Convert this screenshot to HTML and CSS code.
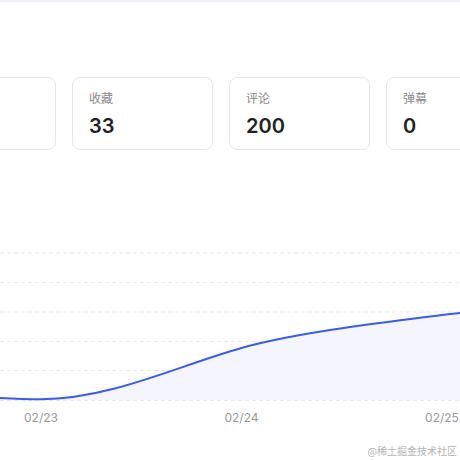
FILE: index.html
```html
<!DOCTYPE html>
<html lang="zh-CN">
<head>
<meta charset="utf-8">
<link rel="stylesheet" href="styles.css">
</head>
<body>
<div class="page">
  <div class="topbar"></div>
  <div class="cards">
    <div class="card"></div>
    <div class="card"><div class="label">收藏</div><div class="value">33</div></div>
    <div class="card"><div class="label">评论</div><div class="value">200</div></div>
    <div class="card"><div class="label">弹幕</div><div class="value">0</div></div>
  </div>
  <svg class="chart" width="460" height="200" viewBox="0 230 460 200">
    <g class="grid">
      <line x1="0" y1="253" x2="460" y2="253"/>
      <line x1="0" y1="282.5" x2="460" y2="282.5"/>
      <line x1="0" y1="312" x2="460" y2="312"/>
      <line x1="0" y1="341.5" x2="460" y2="341.5"/>
      <line x1="0" y1="370.5" x2="460" y2="370.5"/>
      <line x1="0" y1="400.5" x2="460" y2="400.5"/>
    </g>
    <path class="area" d="M-10,397.3 C10,398.6 25,399.3 41,399.3 C110,399.3 180,365 241.5,348 C300,331.6 390,322 442,315 C455,313.3 465,312.5 475,311.6 L475,400 L-10,400 Z"/>
    <path class="line" d="M-10,397.3 C10,398.6 25,399.3 41,399.3 C110,399.3 180,365 241.5,348 C300,331.6 390,322 442,315 C455,313.3 465,312.5 475,311.6"/>
    <g class="axis">
      <text x="41" y="421.5">02/23</text>
      <text x="241.5" y="421.5">02/24</text>
      <text x="442" y="421.5">02/25</text>
    </g>
  </svg>
  <div class="watermark">@稀土掘金技术社区</div>
</div>
</body>
</html>
```

FILE: styles.css
```css
html, body {
  margin: 0;
  padding: 0;
  background: #ffffff;
}
body {
  width: 460px;
  height: 460px;
  overflow: hidden;
  font-family: Inter, "Noto Sans CJK SC", sans-serif;
}
.page {
  position: relative;
  width: 460px;
  height: 460px;
  overflow: hidden;
}
.topbar {
  height: 2px;
  background: #edf0f5;
}
.cards {
  display: flex;
  gap: 16px;
  margin-top: 75px;
  margin-left: -85px;
}
.card {
  flex: 0 0 141px;
  box-sizing: border-box;
  height: 73px;
  border: 1px solid #e6e7eb;
  border-radius: 8px;
  padding: 11px 16px 0 16px;
}
.label {
  font-size: 12px;
  line-height: 18px;
  color: #8a8a8a;
  font-family: "Noto Sans CJK SC", sans-serif;
}
.value {
  margin-top: 5px;
  font-size: 20px;
  line-height: 28px;
  font-weight: 600;
  color: #222222;
}
.chart {
  display: block;
  margin-top: 80px;
}
.grid line {
  stroke: #e9e9ec;
  stroke-width: 1;
  stroke-dasharray: 4 3;
}
.area {
  fill: #f5f6fd;
}
.line {
  fill: none;
  stroke: #3a5af2;
  stroke-width: 2;
}
.axis text {
  font-family: Inter, sans-serif;
  font-size: 12px;
  fill: #9a9a9a;
  text-anchor: middle;
}
.watermark {
  position: absolute;
  right: 3px;
  bottom: 2px;
  font-family: "Noto Sans CJK SC", sans-serif;
  font-size: 10px;
  line-height: 14px;
  color: #b3b3b3;
}
```
